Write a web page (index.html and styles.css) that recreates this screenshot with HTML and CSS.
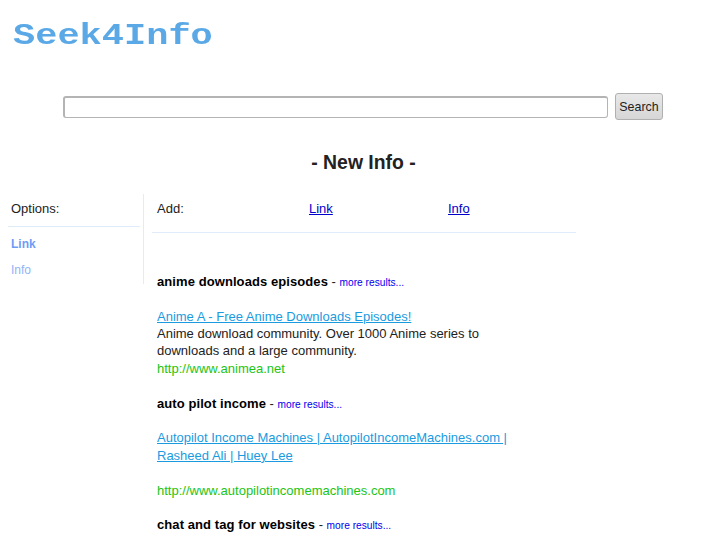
FILE: index.html
```html
<!DOCTYPE html>
<html lang="en">
<head>
<meta charset="utf-8">
<title>Seek4Info</title>
<link rel="stylesheet" href="styles.css">
</head>
<body>
<header class="logo"><span class="logo-text">Seek4Info</span></header>
<form class="search">
  <input class="search-input" type="text" aria-label="Search">
  <button class="search-button" type="button">Search</button>
</form>
<h1 class="title">- New Info -</h1>
<div class="layout">
  <aside class="side">
    <div class="side-head">Options:</div>
    <a class="side-link active">Link</a>
    <a class="side-link">Info</a>
  </aside>
  <main class="content">
    <div class="tabs">
      <span class="tab-label">Add:</span>
      <a class="tab tab-link" href="#">Link</a>
      <a class="tab" href="#">Info</a>
    </div>
    <section class="result">
      <h2 class="kw"><b>anime downloads episodes</b> - <a class="more" href="#">more results...</a></h2>
      <a class="rlink" href="#">Anime A - Free Anime Downloads Episodes!</a>
      <p class="desc">Anime download community. Over 1000 Anime series to downloads and a large community.</p>
      <div class="url">http://www.animea.net</div>
    </section>
    <section class="result">
      <h2 class="kw"><b>auto pilot income</b> - <a class="more" href="#">more results...</a></h2>
      <a class="rlink" href="#">Autopilot Income Machines | AutopilotIncomeMachines.com | Rasheed Ali | Huey Lee</a>
      <p class="desc">&nbsp;</p>
      <div class="url">http://www.autopilotincomemachines.com</div>
    </section>
    <section class="result">
      <h2 class="kw"><b>chat and tag for websites</b> - <a class="more" href="#">more results...</a></h2>
    </section>
  </main>
</div>
</body>
</html>
```
FILE: styles.css
```css
html, body { margin: 0; padding: 0; height: 545px; overflow: hidden; background: #fff; }
body { font-family: "Liberation Sans", Arial, sans-serif; font-size: 13px; line-height: 17.4px; color: #222; }
.logo {
  font-family: "Liberation Mono", "Courier New", monospace;
  font-weight: bold; font-size: 30px; line-height: 36px; color: #5aa9e6;
  padding: 18px 0 0 13px; height: 45px;
}
.logo-text { display: inline-block; transform: scaleX(1.233); transform-origin: left center; filter: blur(0.35px); }
.search { display: flex; align-items: center; padding: 30px 0 0 63px; gap: 7px; }
.search-input {
  box-sizing: border-box; width: 545px; height: 22px; margin: 0;
  border: 1px solid #b4b4b4; border-top-width: 2px; border-left-width: 2px; border-radius: 3px; background: #fff;
}
.search-button {
  box-sizing: border-box; width: 48px; height: 27px; padding: 0; margin: 0;
  font: 12.4px "Liberation Sans", Arial, sans-serif; color: #222;
  background: linear-gradient(#e8e8e8, #d6d6d6); border: 1px solid #b0b0b0; border-radius: 3px;
}
.title { margin: 29px 0 0; text-align: center; font-size: 19.4px; line-height: 26px; font-weight: bold; color: #222; }
.layout { display: flex; margin-top: 19px; padding-left: 8px; }
.side { width: 135px; height: 90px; border-right: 1px solid #e0ecfa; flex: none; }
.side-head { height: 32px; line-height: 29px; padding-left: 3px; border-bottom: 1px solid #e0ecfa; margin-right: 3px; }
.side-link { display: block; padding-left: 3px; font-size: 12px; line-height: 26px; color: #8fb4f8; }
.side-head + .side-link { margin-top: 4px; }
.side-link.active { font-weight: bold; color: #6f9bf5; }
.content { margin-left: 8px; flex: none; width: 424px; }
.tabs { display: flex; width: 419px; height: 38px; border-bottom: 1px solid #e0ecfa; padding-left: 5px; line-height: 29px; }
.tab-label { width: 152px; }
.tab { color: #00c; }
.tab-link { width: 139px; flex: none; }
.result { padding-left: 5px; width: 360px; }
.result:first-of-type { margin-top: 39.8px; }
.kw { margin: 0 0 17.4px; font-size: 13px; line-height: 17.4px; font-weight: normal; }
.kw b { color: #000; letter-spacing: 0.08px; }
.more { font-size: 10.2px; line-height: 1; color: #00e; text-decoration: none; }
.rlink { color: #1a9be0; display: block; }
.desc { margin: 0; }
.url { color: #22c414; margin-bottom: 17.4px; }
```
